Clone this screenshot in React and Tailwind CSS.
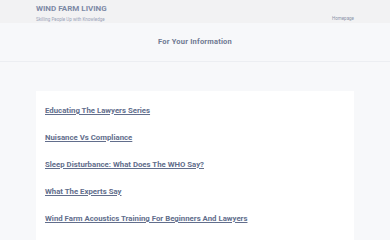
const links = [
  "Educating The Lawyers Series",
  "Nuisance Vs Compliance",
  "Sleep Disturbance: What Does The WHO Say?",
  "What The Experts Say",
  "Wind Farm Acoustics Training For Beginners And Lawyers",
];

export default function App() {
  return (
    <div className="min-h-[240px] bg-[#f7f8fa] font-['Roboto',sans-serif]">
      <header className="h-[23px] bg-[#f2f2f3] px-[36px] flex items-start justify-between">
        <div className="pt-[5px]">
          <div className="text-[8px] leading-[8px] font-bold text-[#7d89a6]">
            WIND FARM LIVING
          </div>
          <div className="mt-[4px] text-[4.5px] leading-[5px] text-[#9aa3b8]">
            Skilling People Up with Knowledge
          </div>
        </div>
        <a className="mt-[16px] text-[4.5px] leading-[5px] text-[#8a93a8]">
          Homepage
        </a>
      </header>
      <div className="h-[39px] border-b border-[#eceef2] flex items-center justify-center">
        <h1 className="text-[7.5px] font-bold text-[#6f7a92] tracking-[0.2px]">
          For Your Information
        </h1>
      </div>
      <div className="px-[36px] pt-[29px]">
        <div className="bg-white pl-[9px] pt-[15px] pb-[10px]">
          {links.map((l) => (
            <a
              key={l}
              className="block h-[27px] text-[7.8px] leading-[9px] font-bold text-[#626e8c] underline underline-offset-[1px]"
            >
              {l}
            </a>
          ))}
        </div>
      </div>
    </div>
  );
}
